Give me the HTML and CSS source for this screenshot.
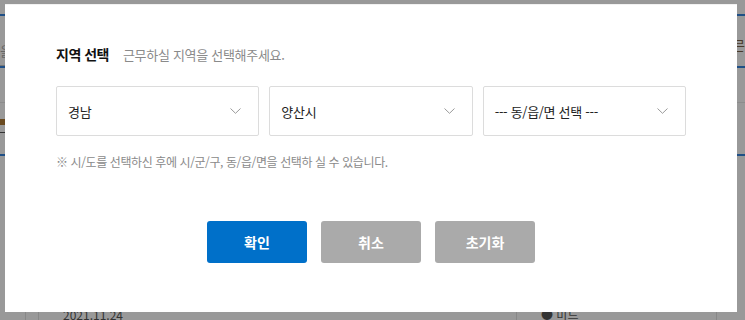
FILE: index.html
```html
<!DOCTYPE html>
<html lang="ko">
<head>
<meta charset="utf-8">
<link rel="stylesheet" href="styles.css">
</head>
<body>
<div class="page">
  <div class="bg-line blue first"></div>
  <div class="bg-row">
    <span class="bg-tab">을</span>
    <span class="bg-tab right">!믄</span>
  </div>
  <div class="bg-line blue second"></div>
  <div class="bg-line mid"></div>
  <div class="bg-icon-row"><span class="bg-icon"></span></div>
  <div class="bg-line dark"></div>
  <div class="bg-line blue third"></div>
  <div class="bg-bottom">
    <span class="bg-cell narrow"></span>
    <span class="bg-cell narrow"></span>
    <span class="bg-date">2021.11.24</span>
    <span class="bg-cell wide"></span>
    <span class="bg-name">● 미드</span>
    <span class="bg-cell end"></span>
  </div>

  <div class="modal">
    <div class="modal-head">
      <h2 class="modal-title">지역 선택</h2>
      <span class="modal-sub">근무하실 지역을 선택해주세요.</span>
    </div>
    <div class="selects">
      <div class="select"><span>경남</span><svg class="chev" width="11" height="6" viewBox="0 0 11 6"><path d="M0.5 0.5 L5.5 5.3 L10.5 0.5" fill="none" stroke="#999" stroke-width="1"/></svg></div>
      <div class="select"><span>양산시</span><svg class="chev" width="11" height="6" viewBox="0 0 11 6"><path d="M0.5 0.5 L5.5 5.3 L10.5 0.5" fill="none" stroke="#999" stroke-width="1"/></svg></div>
      <div class="select"><span>--- 동/읍/면 선택 ---</span><svg class="chev" width="11" height="6" viewBox="0 0 11 6"><path d="M0.5 0.5 L5.5 5.3 L10.5 0.5" fill="none" stroke="#999" stroke-width="1"/></svg></div>
    </div>
    <p class="notice">※ 시/도를 선택하신 후에 시/군/구, 동/읍/면을 선택하 실 수 있습니다.</p>
    <div class="actions">
      <button class="btn primary">확인</button>
      <button class="btn muted">취소</button>
      <button class="btn muted">초기화</button>
    </div>
  </div>
</div>
</body>
</html>
```
FILE: styles.css
```css
* { box-sizing: border-box; }
html, body { margin: 0; padding: 0; }
body {
  background: #999;
  font-family: "Noto Sans CJK KR", "Noto Sans", sans-serif;
}
.page {
  position: relative;
  width: 745px;
  height: 320px;
  overflow: hidden;
  background: #999;
}
.bg-line { height: 2px; }
.bg-line.blue { background: #1f4f86; }
.bg-line.first { margin-top: 14px; }
.bg-row {
  display: flex;
  justify-content: space-between;
  height: 50px;
  padding-top: 28px;
  font-size: 13px;
  color: #666;
}
.bg-tab { line-height: 14px; border-bottom: 1px solid #777; }
.bg-tab.right { color: #4a3a2a; border-bottom: 0; margin-top: -6px; }
.bg-line.mid { background: #8c8c8c; height: 1px; margin-top: 34px; }
.bg-icon-row { height: 22px; padding-top: 16px; }
.bg-icon { display: block; width: 5px; height: 6px; background: #6a4a20; }
.bg-line.dark { background: #333; height: 1px; width: 12px; margin-top: 7px; }
.bg-line.third { margin-top: 21px; }
.bg-bottom {
  display: flex;
  align-items: flex-start;
  margin-top: 153px;
  height: 20px;
  font-size: 12px;
  color: #333;
}
.bg-cell { border-right: 1px solid #888; height: 20px; }
.bg-cell.narrow { width: 13px; }
.bg-cell.narrow:first-child { width: 26px; }
.bg-date { margin-left: 24px; width: 453px; line-height: 12px; }
.bg-cell.wide { width: 1px; }
.bg-name { margin-left: 24px; width: 175px; line-height: 12px; }
.bg-cell.end { width: 1px; }

.modal {
  position: absolute;
  left: 5px;
  top: 4px;
  width: 732px;
  height: 308px;
  background: #fff;
  border-top: 1px solid #f2f2f2;
  padding: 40px 51px 0;
}
.modal-head {
  display: flex;
  align-items: baseline;
  height: 18px;
}
.modal-title {
  margin: 0;
  font-size: 14px;
  font-weight: 700;
  color: #111;
  letter-spacing: -0.5px;
  line-height: 18px;
}
.modal-sub {
  margin-left: 14px;
  font-size: 13px;
  color: #8a8a8a;
  letter-spacing: -0.3px;
  line-height: 18px;
}
.selects {
  display: flex;
  gap: 10px;
  margin-top: 23px;
}
.select {
  width: 204px;
  height: 50px;
  border: 1px solid #dcdcdc;
  border-radius: 2px;
  display: flex;
  align-items: center;
  justify-content: space-between;
  padding: 0 17px 0 11px;
  font-size: 13px;
  color: #222;
  letter-spacing: -0.3px;
}
.chev { display: block; }
.notice {
  margin: 18px 0 0;
  font-size: 12px;
  line-height: 16px;
  color: #8a8a8a;
  letter-spacing: -0.4px;
}
.actions {
  display: flex;
  justify-content: center;
  gap: 14px;
  margin-top: 51px;
  margin-left: -51px;
  margin-right: -51px;
}
.btn {
  width: 100px;
  height: 42px;
  border: 0;
  border-radius: 3px;
  color: #fff;
  font-family: inherit;
  font-size: 14px;
  font-weight: 700;
  cursor: pointer;
}
.btn.primary { background: #0070c9; }
.btn.muted { background: #aaaaaa; }
```
